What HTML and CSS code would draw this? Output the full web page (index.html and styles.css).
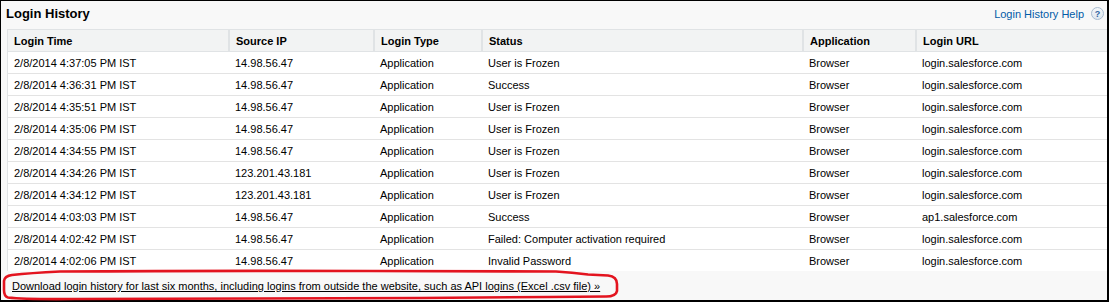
FILE: index.html
```html
<!DOCTYPE html>
<html>
  <head>
    <title>Login History</title>
    <link rel="stylesheet" href="styles.css">
  </head>
  <body>
    <div class="frame">
      <div class="pb-header">
        <h2 class="pb-title">Login History</h2>
        <div class="help">
          <a href="#" class="help-link">Login History Help</a>
          <span class="help-icon">?</span>
        </div>
      </div>

      <div class="list">
        <table>
          <colgroup>
            <col class="c-time">
            <col class="c-ip">
            <col class="c-type">
            <col class="c-status">
            <col class="c-app">
            <col>
          </colgroup>
          <thead>
            <tr>
              <th>Login Time</th>
              <th>Source IP</th>
              <th>Login Type</th>
              <th>Status</th>
              <th>Application</th>
              <th>Login URL</th>
            </tr>
          </thead>
          <tbody>
            <tr>
              <td>2/8/2014 4:37:05 PM IST</td>
              <td>14.98.56.47</td>
              <td>Application</td>
              <td>User is Frozen</td>
              <td>Browser</td>
              <td>login.salesforce.com</td>
            </tr>
            <tr>
              <td>2/8/2014 4:36:31 PM IST</td>
              <td>14.98.56.47</td>
              <td>Application</td>
              <td>Success</td>
              <td>Browser</td>
              <td>login.salesforce.com</td>
            </tr>
            <tr>
              <td>2/8/2014 4:35:51 PM IST</td>
              <td>14.98.56.47</td>
              <td>Application</td>
              <td>User is Frozen</td>
              <td>Browser</td>
              <td>login.salesforce.com</td>
            </tr>
            <tr>
              <td>2/8/2014 4:35:06 PM IST</td>
              <td>14.98.56.47</td>
              <td>Application</td>
              <td>User is Frozen</td>
              <td>Browser</td>
              <td>login.salesforce.com</td>
            </tr>
            <tr>
              <td>2/8/2014 4:34:55 PM IST</td>
              <td>14.98.56.47</td>
              <td>Application</td>
              <td>User is Frozen</td>
              <td>Browser</td>
              <td>login.salesforce.com</td>
            </tr>
            <tr>
              <td>2/8/2014 4:34:26 PM IST</td>
              <td>123.201.43.181</td>
              <td>Application</td>
              <td>User is Frozen</td>
              <td>Browser</td>
              <td>login.salesforce.com</td>
            </tr>
            <tr>
              <td>2/8/2014 4:34:12 PM IST</td>
              <td>123.201.43.181</td>
              <td>Application</td>
              <td>User is Frozen</td>
              <td>Browser</td>
              <td>login.salesforce.com</td>
            </tr>
            <tr>
              <td>2/8/2014 4:03:03 PM IST</td>
              <td>14.98.56.47</td>
              <td>Application</td>
              <td>Success</td>
              <td>Browser</td>
              <td>ap1.salesforce.com</td>
            </tr>
            <tr>
              <td>2/8/2014 4:02:42 PM IST</td>
              <td>14.98.56.47</td>
              <td>Application</td>
              <td>Failed: Computer activation required</td>
              <td>Browser</td>
              <td>login.salesforce.com</td>
            </tr>
            <tr class="last">
              <td>2/8/2014 4:02:06 PM IST</td>
              <td>14.98.56.47</td>
              <td>Application</td>
              <td>Invalid Password</td>
              <td>Browser</td>
              <td>login.salesforce.com</td>
            </tr>
          </tbody>
        </table>
      </div>

      <div class="pb-footer">
        <a href="#" class="download">Download login history for last six months, including logins from outside the website, such as API logins (Excel .csv file) &raquo;</a>
      </div>

      <!-- red hand-drawn annotation around the download link -->
      <svg class="markup" width="630" height="36" viewBox="0 268 630 36">
        <path d="M60 271.5 Q200 270.5 370 271 L556 271.5 Q572 272.5 588 274.5 L608 275.5 Q617 276.5 617 284 L617 291 Q616 296.5 606 296.5 L548 297 Q500 297.5 420 298 L75 299 Q25 299.5 8 297.5 Q4 296.5 4 290 L4 281 Q4.5 276 12 275 Q30 273 60 271.5 Z"
              fill="none" stroke="#e3141f" stroke-width="2.6" stroke-linejoin="round" />
      </svg>
    </div>
  </body>
</html>
```

FILE: styles.css
```css
body {
  margin: 0;
  font-family: "Liberation Sans", Arial, sans-serif;
  font-size: 11px;
  color: #000;
}

.frame {
  position: relative;
  width: 1109px;
  height: 302px;
  box-sizing: border-box;
  border: 1px solid #000;
  border-right-width: 2px;
  border-bottom-width: 2px;
  background-color: #f8f8f8;
}

.pb-header {
  display: flex;
  justify-content: space-between;
  align-items: center;
  height: 25px;
  padding: 0 3px 3px 5px;
}

.pb-title {
  margin: 0;
  font-size: 13px;
  font-weight: bold;
  color: #000;
}

.help {
  display: flex;
  align-items: center;
  gap: 7px;
}

.help-link {
  color: #015ba7;
  text-decoration: none;
}

.help-icon {
  display: flex;
  align-items: center;
  justify-content: center;
  width: 11px;
  height: 11px;
  border: 1px solid #a7bbd0;
  border-radius: 50%;
  background: linear-gradient(#f4f7fa, #dfe7ef);
  color: #2f65a3;
  font-size: 9px;
  font-weight: bold;
}

.list {
  margin-left: 6px;
  border-left: 1px solid #e0e3e5;
  border-top: 1px solid #e0e3e5;
  background-color: #fff;
}

table {
  width: 100%;
  border-collapse: collapse;
}

.c-time {
  width: 221px;
}
.c-ip {
  width: 145px;
}
.c-type {
  width: 108px;
}
.c-status {
  width: 321px;
}
.c-app {
  width: 113px;
}

th,
td {
  height: 21px;
  padding: 0 6px;
  text-align: left;
  border-bottom: 1px solid #e3e3e3;
}

th {
  background-color: #f2f3f3;
  font-weight: bold;
  border-left: 2px solid #e0e3e5;
  border-bottom-color: #e0e3e5;
}

th:first-child {
  border-left: none;
}

tr.last td {
  border-bottom: none;
}

.pb-footer {
  display: flex;
  align-items: center;
  height: 28px;
  padding-left: 11px;
  padding-top: 2px;
  box-sizing: border-box;
}

.download {
  color: #000;
  text-decoration: underline;
}

.markup {
  position: absolute;
  left: -1px;
  top: 267px;
}
```
